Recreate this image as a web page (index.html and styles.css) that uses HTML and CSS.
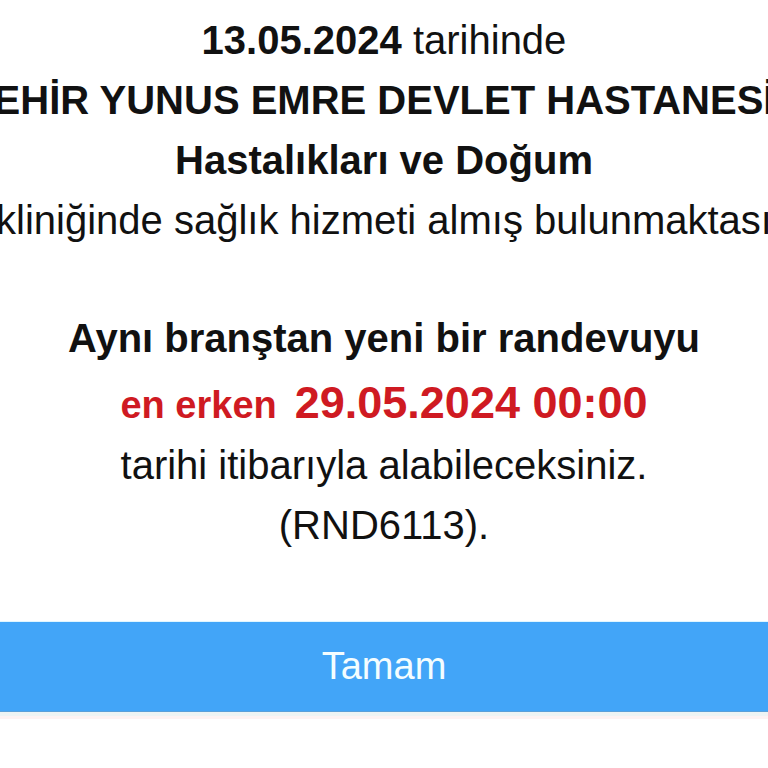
FILE: index.html
```html
<!DOCTYPE html>
<html lang="tr">
<head>
<meta charset="utf-8">
<title>Randevu</title>
<link rel="stylesheet" href="styles.css">
</head>
<body>
<div class="dialog">
  <div class="message">
    <div class="line"><b>13.05.2024</b> tarihinde</div>
    <div class="line wide"><span><b>EHİR YUNUS EMRE DEVLET HASTANESİ</b></span></div>
    <div class="line"><b>Hastalıkları ve Doğum</b></div>
    <div class="line wide"><span>kliniğinde sağlık hizmeti almış bulunmaktası</span></div>
  </div>
  <div class="message second">
    <div class="line"><b>Aynı branştan yeni bir randevuyu</b></div>
    <div class="line red"><b class="small">en erken</b><b class="date">29.05.2024 00:00</b></div>
    <div class="line">tarihi itibarıyla alabileceksiniz.</div>
    <div class="line">(RND6113).</div>
  </div>
  <div class="actions">
    <button class="ok">Tamam</button>
  </div>
</div>
</body>
</html>
```

FILE: styles.css
```css
html, body {
  margin: 0;
  padding: 0;
  background: #ffffff;
  overflow: hidden;
}
body {
  width: 768px;
  height: 768px;
  font-family: "Liberation Sans", Arial, Helvetica, sans-serif;
  color: #111111;
}
.dialog {
  display: flex;
  flex-direction: column;
  width: 768px;
}
.message {
  padding-top: 10px;
  font-size: 40px;
  line-height: 60px;
  text-align: center;
}
.second {
  padding-top: 58px;
}
.line {
  white-space: nowrap;
}
.line b {
  font-weight: 700;
}
.wide {
  display: flex;
  justify-content: center;
  width: 768px;
}
.wide span {
  flex: none;
}
.red {
  display: flex;
  justify-content: center;
  align-items: baseline;
  gap: 18px;
  color: #cf1a22;
  padding-top: 5px;
}
.red .small {
  font-size: 38px;
}
.red .date {
  font-size: 45px;
}
.actions {
  margin-top: 66px;
  border-top: 1px solid #dff6ff;
  border-bottom: 4px solid #eef4f4;
  box-shadow: 0 3px 0 #fdf3f3;
}
.ok {
  display: block;
  width: 100%;
  height: 90px;
  margin: 0;
  padding: 0;
  border: 0;
  border-bottom: 1px solid #5ba0d8;
  background: #42a5f8;
  color: #f4fdff;
  font-family: "Liberation Sans", Arial, Helvetica, sans-serif;
  font-size: 38px;
  line-height: 89px;
  text-align: center;
}
```
